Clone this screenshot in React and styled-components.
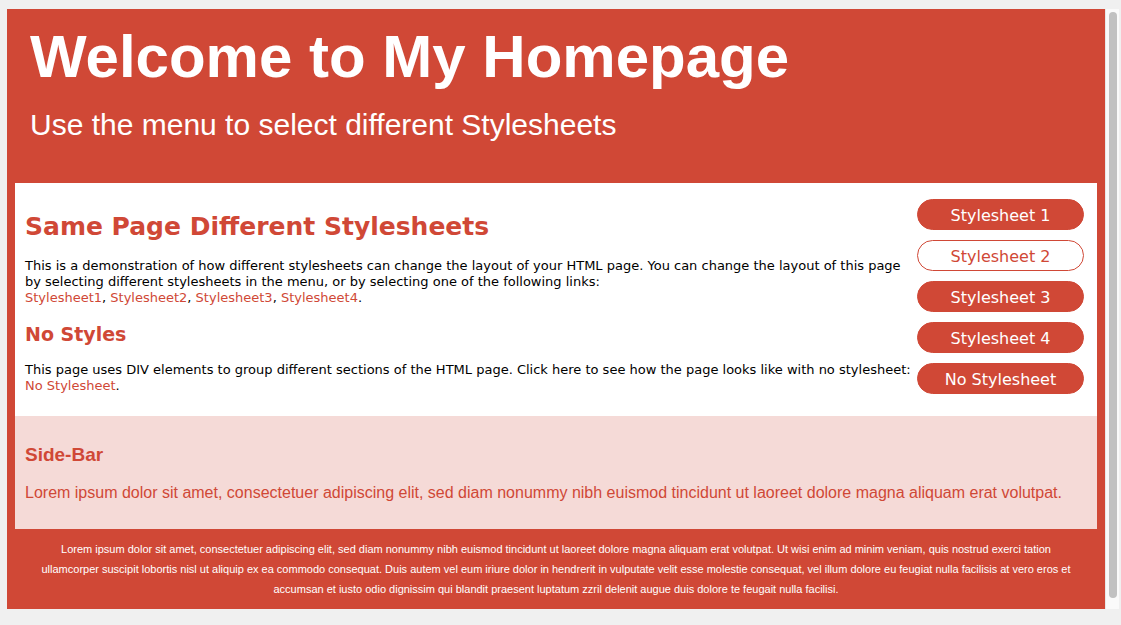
import React from "react";
import styled, { createGlobalStyle } from "styled-components";

const red = "#d04836";
const sans = '"Liberation Sans", Arial, sans-serif';
const verdana = 'Verdana, "DejaVu Sans", sans-serif';

const Global = createGlobalStyle`
  * { box-sizing: border-box; }
  body { margin: 0; background: #f0f0f0; font-family: ${verdana}; font-size: 13px; line-height: 16px; color: #000; }
  h1, h2, h3, p { margin: 0; }
`;
const Frame = styled.div`
  display: flex;
  margin: 9px 0 16px 7px;
`;
const Page = styled.div`
  flex: 1;
  min-width: 0;
  padding: 0 8px;
  background: ${red};
`;
const ScrollTrack = styled.div`
  width: 14px;
  margin-right: 2px;
  padding: 3px 2px 11px 3px;
  border-left: 1px solid #e8e8e8;
  background: #fafafa;
  display: flex;
`;
const ScrollThumb = styled.div`
  flex: 1;
  border-radius: 4px;
  background: #c1c1c1;
`;
const Header = styled.header`
  padding: 13px 15px 40px;
  color: #fff;
  font-family: ${sans};
`;
const Title = styled.h1`
  font-size: 60px;
  line-height: 70px;
`;
const Tagline = styled.p`
  margin-top: 15px;
  font-size: 30px;
  line-height: 36px;
`;
const Main = styled.div`
  display: flex;
  align-items: flex-start;
  background: #fff;
  padding: 16px 13px 22px 10px;
`;
const Content = styled.main`
  flex: 1;
  min-width: 0;
`;
const Heading = styled.h2`
  color: ${red};
  font-size: 25px;
  line-height: 32px;
  margin: 12px 0 15px;
`;
const SubHeading = styled.h3`
  color: ${red};
  font-size: 19px;
  line-height: 24px;
  margin: 16px 0;
`;
const TextLink = styled.a`
  color: ${red};
  text-decoration: none;
`;
const Menu = styled.nav`
  flex: none;
  width: 167px;
  margin-left: 2px;
  display: flex;
  flex-direction: column;
  gap: 10px;
`;
const MenuButton = styled.button`
  height: 31px;
  padding: 2px 0 0;
  border: 1px solid ${red};
  border-radius: 16px;
  background: ${(p) => (p.$active ? "#fff" : red)};
  color: ${(p) => (p.$active ? red : "#fff")};
  font-family: ${verdana};
  font-size: 16px;
  line-height: 20px;
`;
const SideBar = styled.aside`
  padding: 28px 10px 26px;
  background: #f5dad7;
  color: ${red};
  font-family: ${sans};
`;
const SideTitle = styled.h3`
  font-size: 19px;
  line-height: 21px;
`;
const SideText = styled.p`
  margin-top: 18px;
  font-size: 16px;
  line-height: 20px;
`;
const Footer = styled.footer`
  padding: 10px 21px;
  color: #fff;
  text-align: center;
  font-family: ${sans};
  font-size: 11px;
  line-height: 20px;
`;

const buttons = ["Stylesheet 1", "Stylesheet 2", "Stylesheet 3", "Stylesheet 4", "No Stylesheet"];

export default function App() {
  return (
    <>
      <Global />
      <Frame>
        <Page>
          <Header>
            <Title>Welcome to My Homepage</Title>
            <Tagline>Use the menu to select different Stylesheets</Tagline>
          </Header>
          <Main>
            <Content>
              <Heading>Same Page Different Stylesheets</Heading>
              <p>
                This is a demonstration of how different stylesheets can change the layout of your HTML page. You can change the layout of this page by selecting different stylesheets in the menu, or by selecting one of the following links:
                <br />
                <TextLink href="#1">Stylesheet1</TextLink>, <TextLink href="#2">Stylesheet2</TextLink>,{" "}
                <TextLink href="#3">Stylesheet3</TextLink>, <TextLink href="#4">Stylesheet4</TextLink>.
              </p>
              <SubHeading>No Styles</SubHeading>
              <p>
                This page uses DIV elements to group different sections of the HTML page. Click here to see how the page looks like with no stylesheet: <TextLink href="#none">No Stylesheet</TextLink>.
              </p>
            </Content>
            <Menu>
              {buttons.map((label) => (
                <MenuButton key={label} type="button" $active={label === "Stylesheet 2"}>{label}</MenuButton>
              ))}
            </Menu>
          </Main>
          <SideBar>
            <SideTitle>Side-Bar</SideTitle>
            <SideText>Lorem ipsum dolor sit amet, consectetuer adipiscing elit, sed diam nonummy nibh euismod tincidunt ut laoreet dolore magna aliquam erat volutpat.</SideText>
          </SideBar>
          <Footer>
            Lorem ipsum dolor sit amet, consectetuer adipiscing elit, sed diam nonummy nibh euismod tincidunt ut laoreet dolore magna aliquam erat volutpat. Ut wisi enim ad minim veniam, quis nostrud exerci tation ullamcorper suscipit lobortis nisl ut aliquip ex ea commodo consequat. Duis autem vel eum iriure dolor in hendrerit in vulputate velit esse molestie consequat, vel illum dolore eu feugiat nulla facilisis at vero eros et accumsan et iusto odio dignissim qui blandit praesent luptatum zzril delenit augue duis dolore te feugait nulla facilisi.
          </Footer>
        </Page>
        <ScrollTrack><ScrollThumb /></ScrollTrack>
      </Frame>
    </>
  );
}
